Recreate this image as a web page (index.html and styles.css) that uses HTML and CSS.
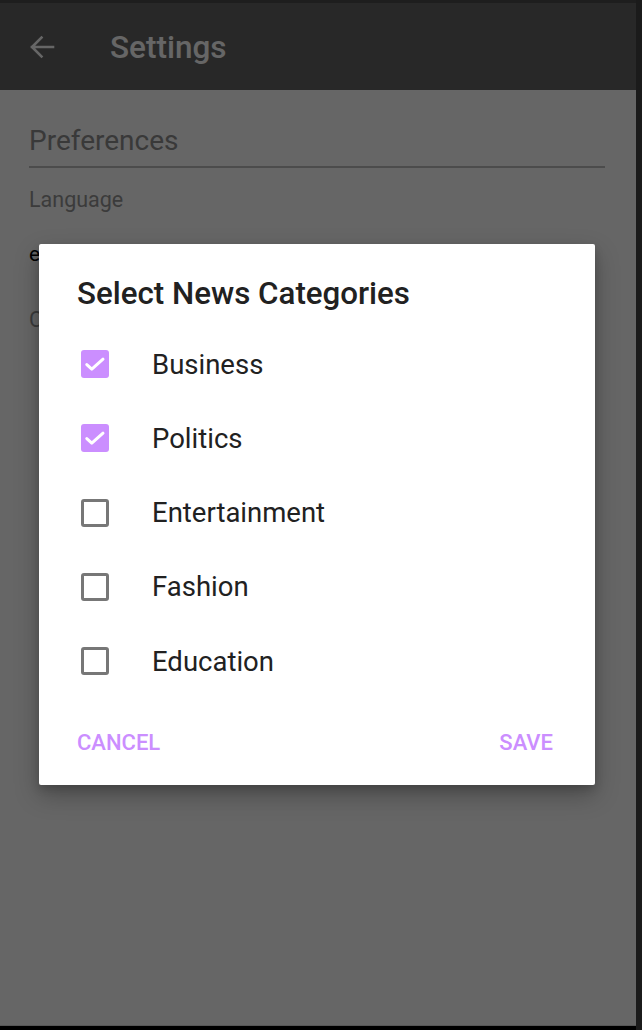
FILE: index.html
```html
<!DOCTYPE html>
<html>
<head>
<meta charset="utf-8">
<link rel="stylesheet" href="styles.css">
</head>
<body>
<div class="device">
  <div class="screen">
    <div class="statusbar"></div>
    <header class="appbar">
      <svg class="back" width="28" height="28" viewBox="0 0 28 28">
        <path d="M25 14 H4 M13.5 4.5 L4 14 L13.5 23.5" fill="none" stroke="#fff" stroke-width="2.6" stroke-linecap="square"/>
      </svg>
      <span class="title">Settings</span>
    </header>
    <main class="content">
      <h2 class="section">Preferences</h2>
      <div class="pref-label">Language</div>
      <div class="pref-value">english</div>
      <div class="pref-label second">Categories</div>
    </main>

    <div class="scrim">
      <div class="dialog">
        <div class="dialog-title">Select News Categories</div>
        <ul class="options">
          <li class="option"><span class="box checked"><svg width="28" height="28" viewBox="0 0 28 28"><path d="M5.8 14.6 L10.8 19.2 L22 9.2" fill="none" stroke="#fff" stroke-width="3" stroke-linecap="round" stroke-linejoin="round"/></svg></span><span class="label">Business</span></li>
          <li class="option"><span class="box checked"><svg width="28" height="28" viewBox="0 0 28 28"><path d="M5.8 14.6 L10.8 19.2 L22 9.2" fill="none" stroke="#fff" stroke-width="3" stroke-linecap="round" stroke-linejoin="round"/></svg></span><span class="label">Politics</span></li>
          <li class="option"><span class="box"></span><span class="label">Entertainment</span></li>
          <li class="option"><span class="box"></span><span class="label">Fashion</span></li>
          <li class="option"><span class="box"></span><span class="label">Education</span></li>
        </ul>
        <div class="actions">
          <span class="btn">CANCEL</span>
          <span class="btn">SAVE</span>
        </div>
      </div>
    </div>
  </div>
  <div class="bottom"></div>
</div>
</body>
</html>
```
FILE: styles.css
```css
* { box-sizing: border-box; }
html, body {
  margin: 0;
  padding: 0;
  background: #1b1b1b;
  width: 642px;
  height: 1030px;
  overflow: hidden;
  font-family: Roboto, "Noto Sans", sans-serif;
}
.device {
  width: 636px;
  height: 1030px;
  display: flex;
  flex-direction: column;
}
.screen {
  position: relative;
  height: 1025px;
  background: #fff;
  display: flex;
  flex-direction: column;
  overflow: hidden;
}
.bottom {
  height: 5px;
  background: #000;
  border-top: 1px solid #575757;
}
.statusbar {
  height: 3px;
  background: #4b4b4b;
}
.appbar {
  height: 87px;
  background: #646464;
  display: flex;
  align-items: center;
  padding-left: 28px;
}
.back { flex: none; margin-top: 1px; }
.title {
  margin-left: 54px;
  color: #fff;
  font-size: 31.5px;
  font-weight: 500;
  margin-top: 2px;
}
.content {
  padding: 0 31px 0 29px;
}
.section {
  margin: 0;
  padding-top: 35px;
  font-size: 28px;
  font-weight: 400;
  color: #8f8f8f;
  line-height: 32px;
  padding-bottom: 9px;
  border-bottom: 2px solid #bdbdbd;
}
.pref-label {
  font-size: 21.5px;
  color: #959595;
  margin-top: 20px;
  line-height: 24px;
}
.pref-value {
  font-size: 21px;
  color: #000;
  margin-top: 30px;
  line-height: 24px;
}
.pref-label.second {
  margin-top: 42px;
}
.scrim {
  position: absolute;
  inset: 0;
  background: rgba(0, 0, 0, 0.6);
}
.dialog {
  position: absolute;
  left: 39px;
  top: 244px;
  width: 556px;
  height: 541px;
  background: #fff;
  border-radius: 2px;
  box-shadow: 0 10px 24px rgba(0, 0, 0, 0.28), 0 4px 8px rgba(0, 0, 0, 0.15);
  display: flex;
  flex-direction: column;
  padding: 33px 42px 19px 38px;
}
.dialog-title {
  font-size: 31.3px;
  font-weight: 500;
  color: #212121;
  line-height: 34px;
  white-space: nowrap;
}
.options {
  list-style: none;
  margin: 16px 0 0 0;
  padding: 0;
}
.option {
  height: 74.25px;
  display: flex;
  align-items: center;
  padding-left: 4px;
}
.box {
  width: 28px;
  height: 28px;
  border: 3px solid #777;
  border-radius: 3px;
  flex: none;
  position: relative;
}
.box.checked {
  border: none;
  background: #cb8eff;
}
.box svg { display: block; }
.label {
  margin-left: 43px;
  font-size: 27.5px;
  color: #212121;
}
.actions {
  margin-top: auto;
  height: 48px;
  display: flex;
  justify-content: space-between;
  align-items: center;
}
.btn {
  font-size: 22px;
  font-weight: 500;
  color: #cb8eff;
}
```
